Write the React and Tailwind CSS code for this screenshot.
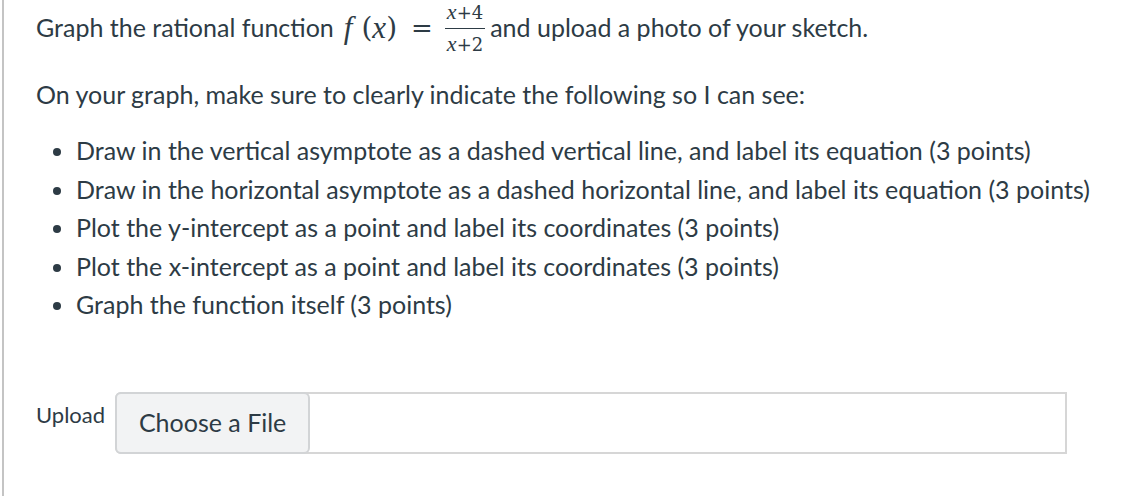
const bullets = [
  "Draw in the vertical asymptote as a dashed vertical line, and label its equation (3 points)",
  "Draw in the horizontal asymptote as a dashed horizontal line, and label its equation (3 points)",
  "Plot the y-intercept as a point and label its coordinates (3 points)",
  "Plot the x-intercept as a point and label its coordinates (3 points)",
  "Graph the function itself (3 points)",
]

const serif = { fontFamily: '"DejaVu Serif", "Liberation Serif", serif' }
const ital = { fontFamily: '"Liberation Serif", serif' }

const Frac = ({ top, bottom }) => (
  <span className="inline-flex flex-col items-center ml-[3px] mr-[5px] text-[18px] leading-[18px]" style={serif}>
    <span className="px-[2px] pb-[6px]"><i className="text-[22px]" style={ital}>x</i>{top}</span>
    <span className="px-[2px] pt-[6px] border-t border-[#2d3b45] w-full text-center"><i className="text-[22px]" style={ital}>x</i>{bottom}</span>
  </span>
)

const App = () => {
  return (
    <div className="w-[1137px] h-[496px] bg-white flex" style={{ fontFamily: 'Lato, "Liberation Sans", sans-serif' }}>
      <div className="w-[2px] ml-[2px] bg-[#c4c4c4] h-full" />
      <div className="flex-1 pl-[32px] pt-[5px] text-[25px] text-[#2d3b45]">
        <p className="h-[46px] flex items-center whitespace-nowrap">
          <span>Graph the rational function</span>
          <span className="text-[26px] ml-[10px] flex items-center" style={serif}>
            <i className="text-[31px]" style={ital}>f</i>
            <span className="ml-[9px] text-[28px]">(</span>
            <i className="text-[31px]" style={ital}>x</i>
            <span className="text-[28px]">)</span>
            <span className="ml-[14px] mr-[9px]">=</span>
          </span>
          <Frac top="+4" bottom="+2" />
          <span>and upload a photo of your sketch.</span>
        </p>
        <p className="mt-[24px] leading-[38px]">On your graph, make sure to clearly indicate the following so I can see:</p>
        <ul className="mt-[18px] list-disc pl-[40px] leading-[38.5px]">
          {bullets.map((b, i) => (
            <li key={i}>{b}</li>
          ))}
        </ul>
        <div className="mt-[68px] flex items-start">
          <span className="mt-[6px] text-[22px]">Upload</span>
          <div className="ml-[10px] flex w-[952px] h-[62px] border-2 border-[#d6d6d6] rounded-l-[6px]">
            <button className="w-[195px] h-[62px] -m-[2px] bg-[#f2f3f4] border-2 border-[#d2d4d6] rounded-[6px] text-[25px] text-[#2d3b45]">
              Choose a File
            </button>
          </div>
        </div>
      </div>
    </div>
  )
}

export default App
